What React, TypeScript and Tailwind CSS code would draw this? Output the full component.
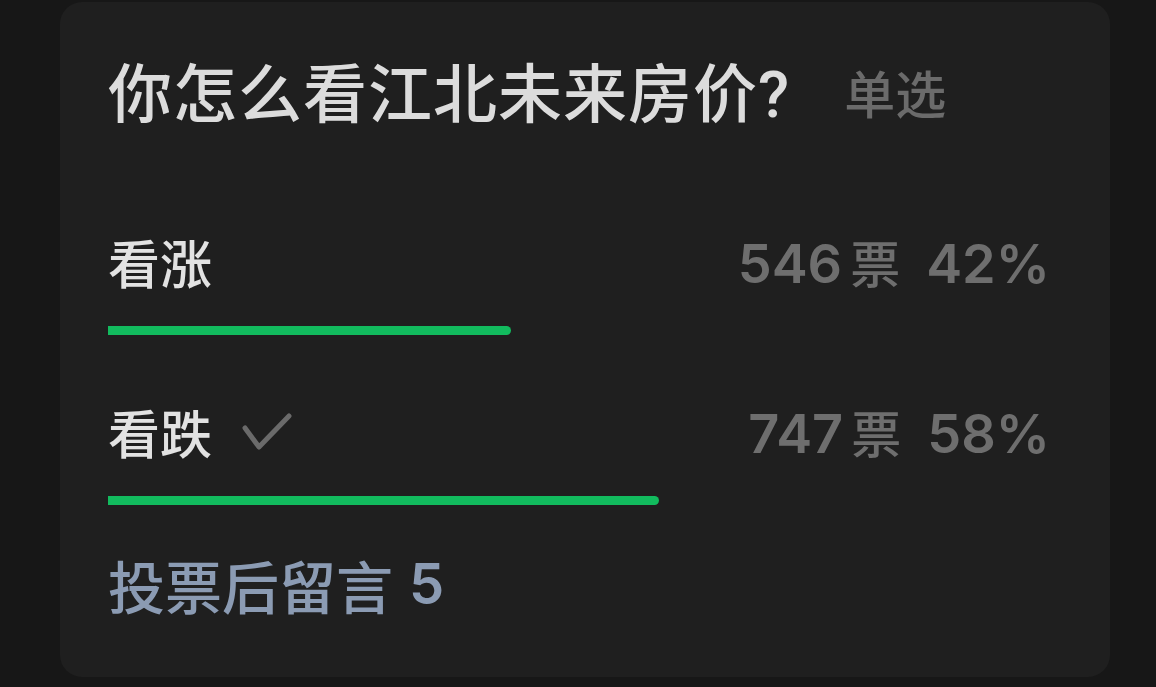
import React from "react";

type Option = { label: string; votes: number; chosen?: boolean };

const options: Option[] = [
  { label: "看涨", votes: 546 },
  { label: "看跌", votes: 747, chosen: true },
];

const TRACK = 954;
const cjk = '"Noto Sans CJK SC", "Noto Sans", sans-serif';
const num = 'Inter, Roboto, "Liberation Sans", "Noto Sans CJK SC", sans-serif';

function Check() {
  return (
    <svg width="50" height="38" viewBox="0 0 50 38" fill="none" className="ml-[30px]">
      <polyline
        points="3,15 17,34 47,3"
        stroke="#6a6a6a"
        strokeWidth="5"
        strokeLinecap="round"
        strokeLinejoin="round"
      />
    </svg>
  );
}

export default function App() {
  const total = options.reduce((s, o) => s + o.votes, 0);
  return (
    <div className="w-[1156px] h-[687px] bg-[#171717] overflow-hidden" style={{ fontFamily: cjk }}>
      <div className="ml-[60px] mt-[2px] w-[1050px] h-[675px] rounded-[22px] bg-[#1f1f1f] pl-[48px] pr-[48px] pt-[58px]">
        {/* question */}
        <div className="flex items-center h-[64px]">
          <span className="text-[64px] leading-[64px] font-medium text-[#dcdcdc] tracking-[1px]">
            你怎么看江北未来房价<span style={{ fontFamily: 'Roboto, "Liberation Sans", sans-serif' }}>?</span>
          </span>
          <span className="ml-[54px] text-[51px] leading-[64px] font-medium text-[#6b6b6b]">单选</span>
        </div>

        {options.map((o, i) => {
          const pct = Math.round((o.votes / total) * 100);
          const w = Math.round((o.votes / total) * TRACK);
          return (
            <div key={o.label} className={i === 0 ? "mt-[112px]" : "mt-[71px]"}>
              <div className="flex items-center justify-between h-[52px] pr-[12px]">
                <div className="flex items-center">
                  <span className="text-[52px] leading-[52px] font-medium text-[#e2e2e2]">{o.label}</span>
                  {o.chosen && <Check />}
                </div>
                <div className="flex items-baseline text-[#6e6e6e]">
                  <span className="text-[54px] leading-[52px] font-semibold" style={{ fontFamily: num }}>
                    {o.votes}
                  </span>
                  <span className="ml-[8px] text-[50px] leading-[52px] font-medium">票</span>
                  <span className="ml-[26px] text-[54px] leading-[52px] font-semibold" style={{ fontFamily: num }}>
                    {pct}%
                  </span>
                </div>
              </div>
              <div className="mt-[38px] h-[9px] w-[954px]">
                <div className="h-[9px] bg-[#12bb5e] rounded-r-full" style={{ width: w }} />
              </div>
            </div>
          );
        })}

        {/* comments link */}
        <div className="mt-[50px] h-[58px] flex items-center text-[#8b9bb3]">
          <span className="text-[57px] leading-[58px] font-medium">投票后留言</span>
          <span className="ml-[16px] text-[56px] leading-[58px] font-semibold" style={{ fontFamily: num }}>
            5
          </span>
        </div>
      </div>
    </div>
  );
}
